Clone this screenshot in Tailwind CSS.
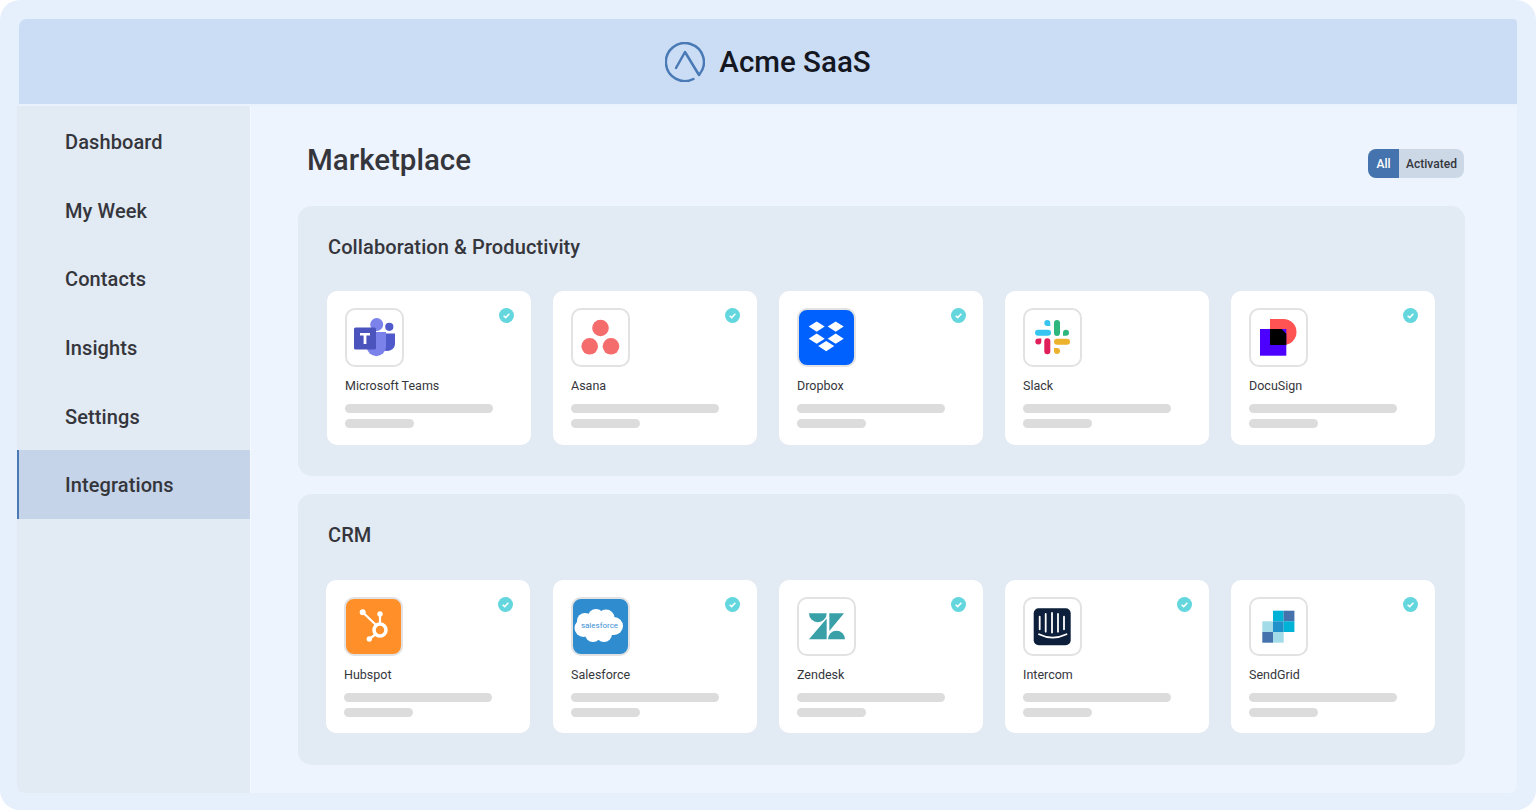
<!DOCTYPE html>
<html lang="en">
<head>
    <meta charset="UTF-8">
    <meta name="viewport" content="width=device-width, initial-scale=1.0">
    <title>Acme SaaS - Marketplace</title>
    <script src="https://cdn.jsdelivr.net/npm/@tailwindcss/browser@4"></script>
</head>
<body class="bg-white font-['Roboto',sans-serif] text-[#35363c] overflow-hidden">
<div class="w-[1536px] h-[810px] rounded-[20px] bg-[#e6f0fd] pt-[19px] pl-[17px] pr-[19px] pb-[17px] flex flex-col">

    <header class="h-[87px] ml-[2px] flex items-center justify-center gap-[14px] bg-[#cbddf4] border-b-2 border-[#e9f2fd] rounded-tl-[8px] rounded-tr-[4px]">
        <svg class="w-[40px] h-[40px]" viewBox="0 0 40 40" fill="none" stroke="#4a7ab5" stroke-width="2.5" stroke-linecap="round" stroke-linejoin="round">
            <path d="M28.5 37A19 19 0 1 1 34.5 32.2"/>
            <path d="M11 26L20 10L34 33"/>
        </svg>
        <span class="text-[29.5px] leading-[40px] font-medium text-[#14171f]">Acme SaaS</span>
    </header>

    <div class="flex flex-1 min-h-0">
        <!-- sidebar -->
        <nav class="w-[234px] pt-[1px] bg-[#e2eaf4] border-r border-r-[#f5f9ff] rounded-bl-[8px] text-[20px] font-medium tracking-[0.1px]">
            <a class="flex items-center h-[68.6px] pt-[2px] pl-[48px]">Dashboard</a>
            <a class="flex items-center h-[68.6px] pt-[2px] pl-[48px]">My Week</a>
            <a class="flex items-center h-[68.6px] pt-[2px] pl-[48px]">Contacts</a>
            <a class="flex items-center h-[68.6px] pt-[2px] pl-[48px]">Insights</a>
            <a class="flex items-center h-[68.6px] pt-[2px] pl-[48px]">Settings</a>
            <a class="flex items-center h-[69px] pt-[2px] pl-[46px] bg-[#c5d4e8] border-l-2 border-[#4a7ab5]">Integrations</a>
        </nav>

        <!-- main -->
        <main class="flex-1 bg-[#edf4fe] pt-[34px] pl-[47px] pr-[52px] rounded-br-[8px]">
            <div class="flex items-start justify-between h-[66px] pl-[9px]">
                <h1 class="text-[29.5px] leading-[40px] font-medium">Marketplace</h1>
                <div class="flex mt-[9px] mr-[1px] h-[29px] w-[96px] rounded-[8px] overflow-hidden text-[12px] font-medium">
                    <span class="w-[31px] flex items-center justify-center bg-[#4573ae] text-white">All</span>
                    <span class="flex-1 flex items-center justify-center bg-[#ccd8e6]">Activated</span>
                </div>
            </div>

            <section class="h-[270px] bg-[#e2eaf4] rounded-[14px] pt-[27px] px-[29px]">
                <h2 class="pl-[1px] text-[20px] leading-[28px] font-medium tracking-[0.1px]">Collaboration &amp; Productivity</h2>
                <div class="grid grid-cols-5 gap-[22px] w-[1108px] mt-[30px]">

                    <div class="relative h-[154px] bg-white rounded-[10px] pt-[17px] pl-[18px]">
                        <svg class="absolute top-[17px] right-[17.5px] w-[15px] h-[15px]" viewBox="0 0 15 15"><circle cx="7.5" cy="7.5" r="7.5" fill="#64d6dd"/><path d="M4.6 7.7L6.7 9.6L10.4 5.7" fill="none" stroke="#fff" stroke-width="1.5"/></svg>
                        <div class="w-[59px] h-[59px] rounded-[10px] border-2 border-[#e2e2e2] bg-white overflow-hidden">
                            <svg class="w-[55px] h-[55px]" viewBox="2 2 55 55">
                                <circle cx="44.3" cy="18.8" r="4.1" fill="#5059c9"/>
                                <path d="M38 25.500H50V36A8 7 0 0 1 38 42Z" fill="#5059c9"/>
                                <circle cx="31.7" cy="16.5" r="6.5" fill="#7b83eb"/>
                                <path d="M21.700 24H41V38.500A9.650 9.650 0 0 1 21.700 38.500Z" fill="#7b83eb"/>
                                <rect x="9" y="19.5" width="22" height="22" rx="1.5" fill="#4b53bc"/>
                                <path d="M15 25H25V27.5H21.4V36H18.6V27.5H15Z" fill="#fff"/>
                            </svg>
                        </div>
                        <p class="mt-[10px] text-[12.5px] leading-[18px]">Microsoft Teams</p>
                        <div class="mt-[9px] w-[148px] h-[9px] rounded-full bg-[#dcdcdc]"></div>
                        <div class="mt-[6px] w-[69px] h-[9px] rounded-full bg-[#dcdcdc]"></div>
                    </div>

                    <div class="relative h-[154px] bg-white rounded-[10px] pt-[17px] pl-[18px]">
                        <svg class="absolute top-[17px] right-[17.5px] w-[15px] h-[15px]" viewBox="0 0 15 15"><circle cx="7.5" cy="7.5" r="7.5" fill="#64d6dd"/><path d="M4.6 7.7L6.7 9.6L10.4 5.7" fill="none" stroke="#fff" stroke-width="1.5"/></svg>
                        <div class="w-[59px] h-[59px] rounded-[10px] border-2 border-[#e2e2e2] bg-white overflow-hidden">
                            <svg class="w-[55px] h-[55px]" viewBox="2 2 55 55" fill="#f56c6c">
                                <circle cx="29.5" cy="20" r="8.3"/>
                                <circle cx="18.7" cy="38.3" r="8.3"/>
                                <circle cx="40" cy="38.3" r="8.3"/>
                            </svg>
                        </div>
                        <p class="mt-[10px] text-[12.5px] leading-[18px]">Asana</p>
                        <div class="mt-[9px] w-[148px] h-[9px] rounded-full bg-[#dcdcdc]"></div>
                        <div class="mt-[6px] w-[69px] h-[9px] rounded-full bg-[#dcdcdc]"></div>
                    </div>

                    <div class="relative h-[154px] bg-white rounded-[10px] pt-[17px] pl-[18px]">
                        <svg class="absolute top-[17px] right-[17.5px] w-[15px] h-[15px]" viewBox="0 0 15 15"><circle cx="7.5" cy="7.5" r="7.5" fill="#64d6dd"/><path d="M4.6 7.7L6.7 9.6L10.4 5.7" fill="none" stroke="#fff" stroke-width="1.5"/></svg>
                        <div class="w-[59px] h-[59px] rounded-[10px] border-2 border-[#e2e2e2] bg-[#0061fe] overflow-hidden">
                            <svg class="w-[55px] h-[55px]" viewBox="2 2 55 55" fill="#fff">
                                <path d="M19.7 13.5L27.7 18.6L19.7 23.7L11.7 18.6Z"/>
                                <path d="M38.7 13.5L46.7 18.6L38.7 23.7L30.7 18.6Z"/>
                                <path d="M19.7 25.6L27.7 30.7L19.7 35.8L11.7 30.7Z"/>
                                <path d="M38.7 25.6L46.7 30.7L38.7 35.8L30.7 30.7Z"/>
                                <path d="M29.2 33L37.2 38.1L29.2 43.2L21.2 38.1Z"/>
                            </svg>
                        </div>
                        <p class="mt-[10px] text-[12.5px] leading-[18px]">Dropbox</p>
                        <div class="mt-[9px] w-[148px] h-[9px] rounded-full bg-[#dcdcdc]"></div>
                        <div class="mt-[6px] w-[69px] h-[9px] rounded-full bg-[#dcdcdc]"></div>
                    </div>

                    <div class="relative h-[154px] bg-white rounded-[10px] pt-[17px] pl-[18px]">
                        <div class="w-[59px] h-[59px] rounded-[10px] border-2 border-[#e2e2e2] bg-white overflow-hidden">
                            <svg class="w-[55px] h-[55px]" viewBox="2 2 55 55">
                                <rect x="12" y="21.7" width="16" height="6" rx="3" fill="#36c5f0"/>
                                <path d="M24.3 12A3 3 0 0 1 27.3 15V18H24.3A3 3 0 0 1 24.3 12Z" fill="#36c5f0"/>
                                <rect x="31" y="12" width="6" height="16" rx="3" fill="#2eb67d"/>
                                <path d="M46 24.7A3 3 0 0 1 43 27.7H40V24.7A3 3 0 0 1 46 24.7Z" fill="#2eb67d"/>
                                <rect x="21.3" y="30.3" width="6" height="16" rx="3" fill="#e01e5a"/>
                                <path d="M12.3 33.6A3 3 0 0 1 15.3 30.6H18.3V33.6A3 3 0 0 1 12.3 33.6Z" fill="#e01e5a"/>
                                <rect x="31" y="30.7" width="16" height="6" rx="3" fill="#ecb22e"/>
                                <path d="M31 40H34A3 3 0 0 1 34 46A3 3 0 0 1 31 43Z" fill="#ecb22e"/>
                            </svg>
                        </div>
                        <p class="mt-[10px] text-[12.5px] leading-[18px]">Slack</p>
                        <div class="mt-[9px] w-[148px] h-[9px] rounded-full bg-[#dcdcdc]"></div>
                        <div class="mt-[6px] w-[69px] h-[9px] rounded-full bg-[#dcdcdc]"></div>
                    </div>

                    <div class="relative h-[154px] bg-white rounded-[10px] pt-[17px] pl-[18px]">
                        <svg class="absolute top-[17px] right-[17.5px] w-[15px] h-[15px]" viewBox="0 0 15 15"><circle cx="7.5" cy="7.5" r="7.5" fill="#64d6dd"/><path d="M4.6 7.7L6.7 9.6L10.4 5.7" fill="none" stroke="#fff" stroke-width="1.5"/></svg>
                        <div class="w-[59px] h-[59px] rounded-[10px] border-2 border-[#e2e2e2] bg-white overflow-hidden">
                            <svg class="w-[55px] h-[55px]" viewBox="2 2 55 55">
                                <path d="M21 11H34.500A13 13 0 0 1 47.500 24A13 13 0 0 1 34.500 37H21Z" fill="#ff5252"/>
                                <rect x="11" y="21" width="26.300" height="26.700" fill="#4c00ff"/>
                                <path d="M21 21H32.500L37.300 25.800V37H21Z" fill="#000"/>
                            </svg>
                        </div>
                        <p class="mt-[10px] text-[12.5px] leading-[18px]">DocuSign</p>
                        <div class="mt-[9px] w-[148px] h-[9px] rounded-full bg-[#dcdcdc]"></div>
                        <div class="mt-[6px] w-[69px] h-[9px] rounded-full bg-[#dcdcdc]"></div>
                    </div>
                </div>
            </section>

            <section class="h-[271px] mt-[18px] bg-[#e2eaf4] rounded-[14px] pt-[27px] px-[29px]">
                <h2 class="pl-[1px] text-[20px] leading-[28px] font-medium tracking-[0.1px]">CRM</h2>
                <div class="grid grid-cols-5 gap-[22px] w-[1108px] mt-[31px]">

                    <div class="relative h-[153px] bg-white rounded-[10px] pt-[17px] pl-[18px] -translate-x-px">
                        <svg class="absolute top-[17px] right-[17.5px] w-[15px] h-[15px]" viewBox="0 0 15 15"><circle cx="7.5" cy="7.5" r="7.5" fill="#64d6dd"/><path d="M4.6 7.7L6.7 9.6L10.4 5.7" fill="none" stroke="#fff" stroke-width="1.5"/></svg>
                        <div class="w-[59px] h-[59px] rounded-[10px] border-2 border-[#e2e2e2] bg-[#ff9029] overflow-hidden">
                            <svg class="w-[55px] h-[55px]" viewBox="2 2 55 55" fill="#fff" stroke="#fff">
                                <circle cx="36" cy="33" r="6" fill="none" stroke-width="3.500"/>
                                <path d="M18.700 15.300L32 28M36 17V27M25.300 42L32 37" fill="none" stroke-width="2.200"/>
                                <circle cx="18.700" cy="15.300" r="3" stroke="none"/>
                                <circle cx="36" cy="17" r="2.700" stroke="none"/>
                                <circle cx="25.300" cy="42" r="2.700" stroke="none"/>
                            </svg>
                        </div>
                        <p class="mt-[10px] text-[12.5px] leading-[18px]">Hubspot</p>
                        <div class="mt-[9px] w-[148px] h-[9px] rounded-full bg-[#dcdcdc]"></div>
                        <div class="mt-[6px] w-[69px] h-[9px] rounded-full bg-[#dcdcdc]"></div>
                    </div>

                    <div class="relative h-[153px] bg-white rounded-[10px] pt-[17px] pl-[18px]">
                        <svg class="absolute top-[17px] right-[17.5px] w-[15px] h-[15px]" viewBox="0 0 15 15"><circle cx="7.5" cy="7.5" r="7.5" fill="#64d6dd"/><path d="M4.6 7.7L6.7 9.6L10.4 5.7" fill="none" stroke="#fff" stroke-width="1.5"/></svg>
                        <div class="w-[59px] h-[59px] rounded-[10px] border-2 border-[#e2e2e2] bg-[#2f8ccf] overflow-hidden">
                            <svg class="w-[55px] h-[55px]" viewBox="2 2 55 55">
                                <g fill="#fff">
                                    <circle cx="14" cy="24" r="8"/>
                                    <circle cx="25" cy="20" r="8"/>
                                    <circle cx="35" cy="21" r="8.500"/>
                                    <circle cx="43" cy="29" r="9"/>
                                    <circle cx="12.500" cy="31" r="9"/>
                                    <circle cx="22" cy="37" r="8"/>
                                    <circle cx="33" cy="37" r="8"/>
                                    <rect x="13" y="22" width="30" height="16"/>
                                </g>
                                <text x="28.500" y="30.500" text-anchor="middle" font-size="8" font-family="Roboto" fill="#3b90d5">salesforce</text>
                            </svg>
                        </div>
                        <p class="mt-[10px] text-[12.5px] leading-[18px]">Salesforce</p>
                        <div class="mt-[9px] w-[148px] h-[9px] rounded-full bg-[#dcdcdc]"></div>
                        <div class="mt-[6px] w-[69px] h-[9px] rounded-full bg-[#dcdcdc]"></div>
                    </div>

                    <div class="relative h-[153px] bg-white rounded-[10px] pt-[17px] pl-[18px]">
                        <svg class="absolute top-[17px] right-[17.5px] w-[15px] h-[15px]" viewBox="0 0 15 15"><circle cx="7.5" cy="7.5" r="7.5" fill="#64d6dd"/><path d="M4.6 7.7L6.7 9.6L10.4 5.7" fill="none" stroke="#fff" stroke-width="1.5"/></svg>
                        <div class="w-[59px] h-[59px] rounded-[10px] border-2 border-[#e2e2e2] bg-white overflow-hidden">
                            <svg class="w-[55px] h-[55px]" viewBox="2 2 55 55" fill="#3aa0a8">
                                <path d="M12 16.300H29.700A8.850 8.850 0 0 1 12 16.300Z"/>
                                <path d="M32.300 16.300H47L32.300 34Z"/>
                                <path d="M12 42.300L29.700 21.500V42.300Z"/>
                                <path d="M31 42.300A8.500 8.500 0 0 1 48 42.300Z"/>
                            </svg>
                        </div>
                        <p class="mt-[10px] text-[12.5px] leading-[18px]">Zendesk</p>
                        <div class="mt-[9px] w-[148px] h-[9px] rounded-full bg-[#dcdcdc]"></div>
                        <div class="mt-[6px] w-[69px] h-[9px] rounded-full bg-[#dcdcdc]"></div>
                    </div>

                    <div class="relative h-[153px] bg-white rounded-[10px] pt-[17px] pl-[18px]">
                        <svg class="absolute top-[17px] right-[17.5px] w-[15px] h-[15px]" viewBox="0 0 15 15"><circle cx="7.5" cy="7.5" r="7.5" fill="#64d6dd"/><path d="M4.6 7.7L6.7 9.6L10.4 5.7" fill="none" stroke="#fff" stroke-width="1.5"/></svg>
                        <div class="w-[59px] h-[59px] rounded-[10px] border-2 border-[#e2e2e2] bg-white overflow-hidden">
                            <svg class="w-[55px] h-[55px]" viewBox="2 2 55 55">
                                <rect x="10.700" y="11.300" width="37" height="37" rx="5" fill="#0d1f3a"/>
                                <path d="M16.700 19.700V32.300M22.700 17V34.700M29 16V35.500M35 17V34.700M41 19.700V32.300" fill="none" stroke="#fff" stroke-width="1.800" stroke-linecap="round"/>
                                <path d="M16 37.300Q29.500 44 43.500 37.300" fill="none" stroke="#fff" stroke-width="1.800" stroke-linecap="round"/>
                            </svg>
                        </div>
                        <p class="mt-[10px] text-[12.5px] leading-[18px]">Intercom</p>
                        <div class="mt-[9px] w-[148px] h-[9px] rounded-full bg-[#dcdcdc]"></div>
                        <div class="mt-[6px] w-[69px] h-[9px] rounded-full bg-[#dcdcdc]"></div>
                    </div>

                    <div class="relative h-[153px] bg-white rounded-[10px] pt-[17px] pl-[18px]">
                        <svg class="absolute top-[17px] right-[17.5px] w-[15px] h-[15px]" viewBox="0 0 15 15"><circle cx="7.5" cy="7.5" r="7.5" fill="#64d6dd"/><path d="M4.6 7.7L6.7 9.6L10.4 5.7" fill="none" stroke="#fff" stroke-width="1.5"/></svg>
                        <div class="w-[59px] h-[59px] rounded-[10px] border-2 border-[#e2e2e2] bg-white overflow-hidden">
                            <svg class="w-[55px] h-[55px]" viewBox="2 2 55 55">
                                <rect x="24" y="13.700" width="10.700" height="10.700" fill="#00b2d6"/>
                                <rect x="34.700" y="13.700" width="10.700" height="10.700" fill="#4571ad"/>
                                <rect x="13.300" y="24.300" width="10.700" height="10.700" fill="#a3dce8"/>
                                <rect x="24" y="24.300" width="10.700" height="10.700" fill="#1f90c9"/>
                                <rect x="34.700" y="24.300" width="10.700" height="10.700" fill="#00b2d6"/>
                                <rect x="13.300" y="35" width="10.700" height="10.700" fill="#4571ad"/>
                                <rect x="24" y="35" width="10.700" height="10.700" fill="#a3dce8"/>
                            </svg>
                        </div>
                        <p class="mt-[10px] text-[12.5px] leading-[18px]">SendGrid</p>
                        <div class="mt-[9px] w-[148px] h-[9px] rounded-full bg-[#dcdcdc]"></div>
                        <div class="mt-[6px] w-[69px] h-[9px] rounded-full bg-[#dcdcdc]"></div>
                    </div>
                </div>
            </section>
        </main>
    </div>
</div>
</body>
</html>
